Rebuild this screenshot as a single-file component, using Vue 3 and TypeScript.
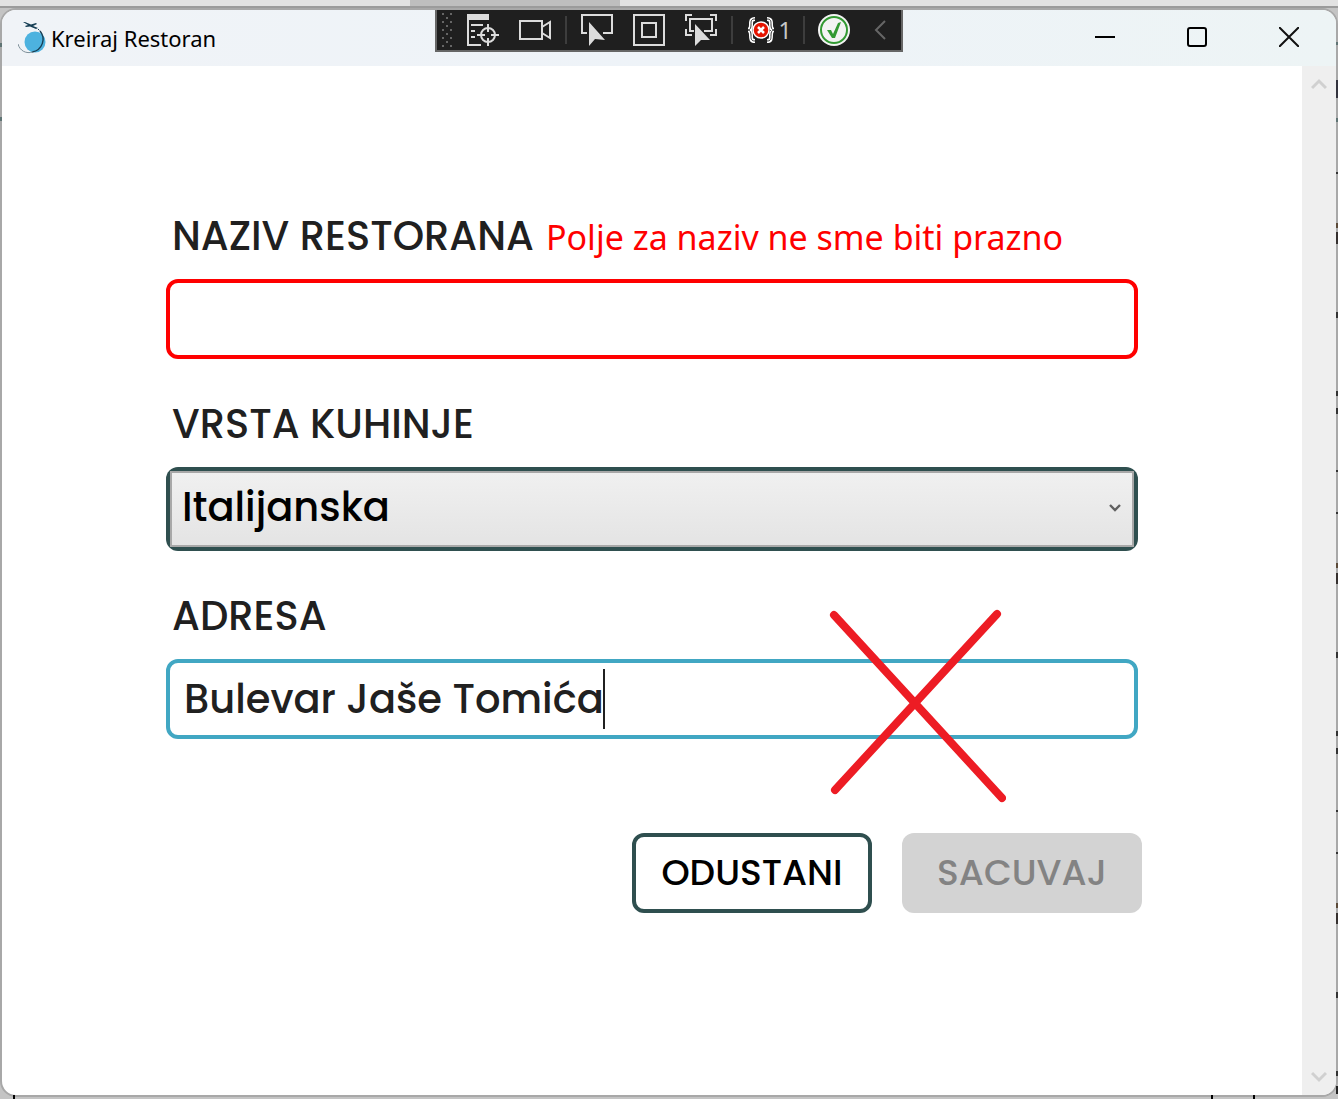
<script setup lang="ts">
import { ref } from 'vue'

const naziv = ref<string>('')
const kuhinja = ref<string>('Italijanska')
const adresa = ref<string>('Bulevar Jaše Tomića')
const kuhinje: string[] = ['Italijanska', 'Kineska', 'Srpska']

interface Speck {
  top: number
  height: number
  color: string
}

// Pieces of the window behind that show along the right edge
const specks: Speck[] = [
  { top: 42, height: 3, color: '#5f7474' },
  { top: 80, height: 18, color: '#33333d' },
  { top: 118, height: 4, color: '#5f7474' },
  { top: 172, height: 2, color: '#333' },
  { top: 223, height: 5, color: '#5b4a38' },
  { top: 232, height: 12, color: '#35302e' },
  { top: 312, height: 6, color: '#333' },
  { top: 391, height: 5, color: '#333' },
  { top: 408, height: 6, color: '#333' },
  { top: 470, height: 2, color: '#333' },
  { top: 512, height: 2, color: '#333' },
  { top: 563, height: 5, color: '#5b4a38' },
  { top: 573, height: 11, color: '#35302e' },
  { top: 652, height: 6, color: '#333' },
  { top: 731, height: 5, color: '#333' },
  { top: 748, height: 6, color: '#333' },
  { top: 810, height: 2, color: '#333' },
  { top: 852, height: 2, color: '#333' },
  { top: 903, height: 5, color: '#5b4a38' },
  { top: 913, height: 11, color: '#35302e' },
  { top: 992, height: 6, color: '#333' },
  { top: 1071, height: 5, color: '#333' },
  { top: 1086, height: 8, color: '#222' },
]
const ticks: number[] = [13, 1211, 1253]
const leftMarks: number[] = [43, 117]
</script>

<template>
  <div class="desktop">
    <div class="behind" aria-hidden="true">
      <div class="behind-bar"><span class="behind-tab"></span></div>
    </div>

    <div class="window">
      <header class="titlebar">
        <svg class="logo" width="30" height="34" viewBox="0 0 30 34">
          <circle cx="17" cy="21" r="10.5" fill="#4db2df" />
          <path d="M20 8L23 11" fill="none" stroke="#173f55" stroke-width="1" stroke-dasharray="2 1" />
          <path d="M22 10C28 17 25 29 14 31" fill="none" stroke="#173f55" stroke-width="1.4" />
          <path d="M0 23C2 30 8 33 15 31" fill="none" stroke="#7d8f98" stroke-width="1" />
          <path d="M5 1L7 1L13 3.500L18 2L19 3L15 5L20 7L18 8L12 5.500L8 6L7 5L10 4Z" fill="#173f55" />
        </svg>
        <h1 class="title">Kreiraj Restoran</h1>
        <div class="controls">
          <button type="button" aria-label="Minimize">
            <svg width="20" height="20" viewBox="0 0 20 20"><path d="M0 10H20" stroke="#000" stroke-width="2" /></svg>
          </button>
          <button type="button" aria-label="Maximize">
            <svg width="20" height="20" viewBox="0 0 20 20"><rect x="1" y="1" width="18" height="18" rx="2" fill="none" stroke="#000" stroke-width="2" /></svg>
          </button>
          <button type="button" aria-label="Close">
            <svg width="20" height="20" viewBox="0 0 20 20"><path d="M0 0L20 20M20 0L0 20" stroke="#111" stroke-width="2" /></svg>
          </button>
        </div>
      </header>

      <div class="debugbar">
        <span class="grip">
          <svg width="10" height="34" viewBox="0 0 10 34" fill="#666">
            <path d="M0 0h2v2h-2zM8 0h2v2h-2zM4 4h2v2h-2zM0 8h2v2h-2zM8 8h2v2h-2zM4 12h2v2h-2zM0 16h2v2h-2zM8 16h2v2h-2zM4 20h2v2h-2zM0 24h2v2h-2zM8 24h2v2h-2zM4 28h2v2h-2zM0 32h2v2h-2zM8 32h2v2h-2z" />
          </svg>
        </span>
        <button type="button" aria-label="Live visual tree">
          <svg width="32" height="32" viewBox="0 0 32 32" fill="none" stroke="#dcdcdc" stroke-width="2">
            <path d="M0 0H22V6H0Z" fill="#dcdcdc" stroke="none" />
            <path d="M1 4V31H14M4 11H16M4 17H8M4 23H8" />
            <circle cx="21" cy="21" r="7" />
            <path d="M21 10V18M21 24V32M10 21H18M24 21H32" />
          </svg>
        </button>
        <button type="button" aria-label="Record">
          <svg width="32" height="32" viewBox="0 0 32 32" fill="none" stroke="#dcdcdc" stroke-width="2">
            <rect x="1" y="7" width="22" height="18" />
            <path d="M23 13L31 8V24L23 19" />
          </svg>
        </button>
        <span class="sep"></span>
        <button type="button" aria-label="Select element">
          <svg width="32" height="32" viewBox="0 0 32 32" fill="none" stroke="#dcdcdc" stroke-width="2">
            <path d="M6 19H1V1H31V19H22" />
            <path d="M8 8L24 26L14 25L8 32Z" fill="#dcdcdc" stroke="none" />
          </svg>
        </button>
        <button type="button" aria-label="Display layout adorners">
          <svg width="32" height="32" viewBox="0 0 32 32" fill="none" stroke="#dcdcdc" stroke-width="2">
            <rect x="1" y="1" width="30" height="30" />
            <rect x="9" y="9" width="14" height="14" />
          </svg>
        </button>
        <button type="button" aria-label="Track focused element">
          <svg width="32" height="32" viewBox="0 0 32 32" fill="none" stroke="#dcdcdc" stroke-width="2">
            <path d="M1 7V1H7M25 1H31V7M1 15V21H7M25 21H31V15" />
            <path d="M9 17H5V5H27V17H19" />
            <path d="M10 10L25 26L16 26L10 32Z" fill="#dcdcdc" stroke="none" />
          </svg>
        </button>
        <span class="sep"></span>
        <button type="button" class="binding" aria-label="Binding failures">
          <svg width="30" height="26" viewBox="0 0 30 26" fill="none">
            <path d="M9 2C5 2 5 4 5 8C5 11 4 13 2 13C4 13 5 15 5 18C5 22 5 24 9 24M21 2C25 2 25 4 25 8C25 11 26 13 28 13C26 13 25 15 25 18C25 22 25 24 21 24" stroke="#fff" stroke-width="4" />
            <path d="M9 2C5 2 5 4 5 8C5 11 4 13 2 13C4 13 5 15 5 18C5 22 5 24 9 24M21 2C25 2 25 4 25 8C25 11 26 13 28 13C26 13 25 15 25 18C25 22 25 24 21 24" stroke="#333" stroke-width="1" />
            <circle cx="15" cy="13" r="8" fill="#e51400" stroke="#fff" stroke-width="1.500" />
            <path d="M12 10L18 16M18 10L12 16" stroke="#fff" stroke-width="2.500" />
          </svg>
          <span>1</span>
        </button>
        <span class="sep"></span>
        <button type="button" class="reload" aria-label="Hot reload">
          <svg width="32" height="32" viewBox="0 0 32 32" fill="none">
            <circle cx="16" cy="16" r="16" fill="#f3f3f3" />
            <circle cx="16" cy="16" r="13" stroke="#339933" stroke-width="2" />
            <path d="M9 16H13L15 20L20 9L23 8L17 24H14Z" fill="#339933" />
          </svg>
        </button>
        <button type="button" class="collapse" aria-label="Collapse">
          <svg width="12" height="20" viewBox="0 0 12 20"><path d="M11 1L2 10L11 19" fill="none" stroke="#666" stroke-width="2" /></svg>
        </button>
      </div>

      <div class="body">
        <main class="content">
          <form class="form" @submit.prevent>
            <div class="group">
              <div class="label-row">
                <label for="naziv">NAZIV RESTORANA</label>
                <span id="naziv-error" class="error">Polje za naziv ne sme biti prazno</span>
              </div>
              <input id="naziv" v-model="naziv" class="field invalid" type="text" aria-describedby="naziv-error" />
            </div>

            <div class="group">
              <div class="label-row"><label for="kuhinja">VRSTA KUHINJE</label></div>
              <div class="select-frame">
                <select id="kuhinja" v-model="kuhinja">
                  <option v-for="k in kuhinje" :key="k" :value="k">{{ k }}</option>
                </select>
                <svg class="arrow" width="12" height="10" viewBox="0 0 12 10"><path d="M1 2L6 7L11 2" fill="none" stroke="#606060" stroke-width="2.400" /></svg>
              </div>
            </div>

            <div class="group">
              <div class="label-row"><label for="adresa">ADRESA</label></div>
              <div class="address">
                <input id="adresa" v-model="adresa" class="field active" type="text" />
                <span class="caret"></span>
                <svg class="cross" width="180" height="196" viewBox="0 0 180 196">
                  <path d="M8 8L176 191M171 7L9 183" fill="none" stroke="#ed1c24" stroke-width="8" stroke-linecap="round" />
                </svg>
              </div>
            </div>

            <div class="actions">
              <button type="button" class="btn cancel">ODUSTANI</button>
              <button type="submit" class="btn save" disabled>SACUVAJ</button>
            </div>
          </form>
        </main>

        <div class="scrollbar">
          <button type="button" aria-label="Scroll up">
            <svg width="16" height="12" viewBox="0 0 16 12"><path d="M1 10L8 3L15 10" fill="none" stroke="#d0d0d0" stroke-width="3" /></svg>
          </button>
          <button type="button" aria-label="Scroll down">
            <svg width="16" height="12" viewBox="0 0 16 12"><path d="M1 2L8 9L15 2" fill="none" stroke="#d0d0d0" stroke-width="3" /></svg>
          </button>
        </div>
      </div>
    </div>

    <div class="edges" aria-hidden="true">
      <i v-for="s in specks" :key="s.top" class="speck" :style="{ top: s.top + 'px', height: s.height + 'px', background: s.color }"></i>
      <i v-for="t in ticks" :key="t" class="tick" :style="{ left: t + 'px' }"></i>
      <i v-for="m in leftMarks" :key="m" class="mark" :style="{ top: m + 'px' }"></i>
    </div>
  </div>
</template>

<style>
body {
  margin: 0;
}
</style>

<style scoped>
* {
  box-sizing: border-box;
}
.desktop {
  position: relative;
  display: flex;
  flex-direction: column;
  min-height: 100vh;
  padding: 8px 0 2px;
  background: #c4c4c4;
  overflow: hidden;
  font-family: 'Segoe UI', 'Noto Sans', sans-serif;
}
.behind,
.edges {
  position: absolute;
  inset: 0;
  pointer-events: none;
}
.behind-bar {
  height: 8px;
  background: #e2e2e2;
  border-bottom: 2px solid #9b9b9b;
}
.behind-tab {
  display: block;
  width: 210px;
  height: 6px;
  margin-left: 410px;
  background: #bebebe;
}
.speck,
.tick,
.mark {
  position: absolute;
}
.speck {
  right: 0;
  width: 2px;
}
.tick {
  bottom: 0;
  width: 2px;
  height: 4px;
  background: #000;
}
.mark {
  left: 0;
  width: 2px;
  height: 4px;
  background: #5f7474;
}
.window {
  position: relative;
  flex: 1;
  display: flex;
  flex-direction: column;
  border: 2px solid #a8a8a8;
  border-radius: 16px;
  background: #fff;
  overflow: hidden;
}
button {
  padding: 0;
  border: 0;
  background: none;
  font: inherit;
}
svg {
  display: block;
}
.titlebar {
  display: flex;
  align-items: center;
  height: 56px;
  padding-left: 16px;
  background: linear-gradient(90deg, #f0f3f7, #eef3f8 50%, #edf4f5);
}
.title {
  margin: 0 0 0 3px;
  font-size: 22px;
  font-weight: 400;
  line-height: 32px;
  color: #000;
}
.controls {
  display: flex;
  height: 54px;
  align-self: flex-start;
  margin-left: auto;
  padding-right: 1px;
}
.controls button {
  display: flex;
  align-items: center;
  justify-content: center;
  width: 92px;
}
.debugbar {
  position: absolute;
  top: -2px;
  left: 50%;
  display: flex;
  align-items: center;
  height: 44px;
  border: 2px solid #666;
  background: #1f1f1f;
  transform: translateX(-50%);
}
.debugbar button {
  display: flex;
  align-items: center;
  justify-content: center;
  width: 52px;
  height: 40px;
}
.grip {
  display: flex;
  justify-content: center;
  width: 20px;
}
.sep {
  width: 2px;
  height: 28px;
  margin: 0 4px;
  background: #3d3d3d;
}
.debugbar .binding {
  width: 62px;
  padding-left: 2px;
  gap: 2px;
  font-size: 23px;
  line-height: 32px;
  color: #c8c8c8;
}
.debugbar .reload {
  width: 50px;
}
.debugbar .collapse {
  width: 42px;
}
.body {
  flex: 1;
  display: flex;
}
.content {
  flex: 1;
  display: flex;
  justify-content: center;
  padding: 145px 20px 40px;
}
.form {
  width: 100%;
  max-width: 972px;
  font-family: Poppins, Inter, sans-serif;
  font-weight: 500;
}
.group {
  margin-bottom: 40px;
}
.label-row {
  display: flex;
  align-items: baseline;
  gap: 12px;
  height: 50px;
  margin-bottom: 18px;
  padding-left: 6px;
  font-size: 40px;
  line-height: 50px;
  color: #202020;
}
.error {
  font-family: 'Segoe UI', 'Noto Sans', sans-serif;
  font-size: 34px;
  font-weight: 400;
  color: #f00;
  white-space: nowrap;
}
.field {
  display: block;
  width: 100%;
  height: 80px;
  padding: 0 14px;
  border: 4px solid;
  border-radius: 12px;
  outline: 0;
  background: #fff;
  font: inherit;
  font-size: 40px;
  color: #202020;
}
.invalid {
  border-color: #f00;
}
.active {
  border-color: #41a7c3;
}
.select-frame {
  position: relative;
  height: 84px;
  padding: 4px;
  border-radius: 12px;
  background: #2f4f4f;
}
.select-frame select {
  display: block;
  width: 100%;
  height: 100%;
  padding: 0 10px 4px;
  border: 2px solid #a8a8a8;
  border-radius: 0;
  outline: 0;
  appearance: none;
  background: linear-gradient(#f0f0f0, #e4e4e4);
  font: inherit;
  font-size: 40px;
  color: #000;
}
.arrow {
  position: absolute;
  top: 36px;
  right: 17px;
  pointer-events: none;
}
.address {
  position: relative;
}
.caret {
  position: absolute;
  top: 10px;
  left: 437px;
  width: 2px;
  height: 60px;
  background: #202020;
}
.cross {
  position: absolute;
  top: -52px;
  right: 132px;
  pointer-events: none;
}
.actions {
  display: flex;
  justify-content: flex-end;
  gap: 30px;
  margin: 94px -4px 0 0;
}
.btn {
  width: 240px;
  height: 80px;
  border-radius: 12px;
  font-size: 36px;
  line-height: 48px;
}
.cancel {
  border: 4px solid #2f4f4f;
  background: #fff;
  color: #000;
}
.save {
  background: #d3d3d3;
  color: #838383;
}
.scrollbar {
  display: flex;
  flex-direction: column;
  justify-content: space-between;
  width: 34px;
  background: #efefef;
}
.scrollbar button {
  display: flex;
  align-items: center;
  justify-content: center;
  height: 36px;
}
</style>
